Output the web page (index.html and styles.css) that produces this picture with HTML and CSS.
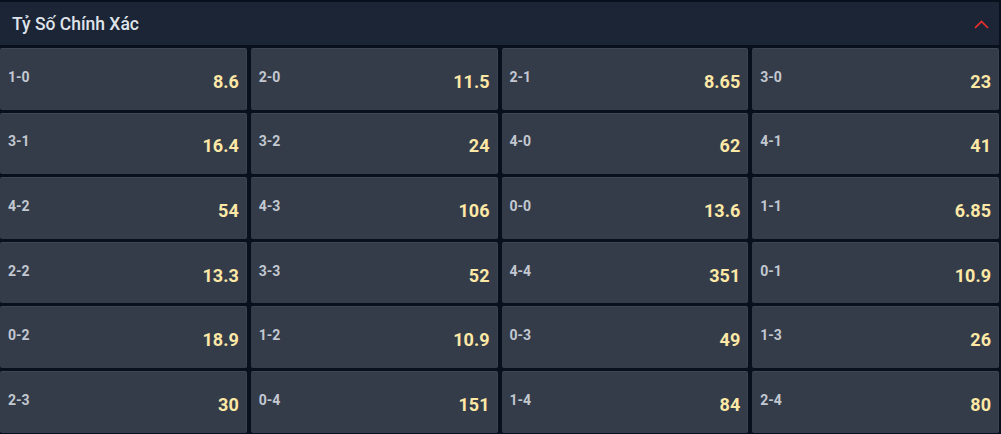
FILE: index.html
```html
<!DOCTYPE html>
<html lang="vi">
<head>
<meta charset="utf-8">
<link rel="stylesheet" href="styles.css">
</head>
<body>
<div class="panel">
  <div class="header">
    <span class="title">Tỷ Số Chính Xác</span>
    <svg class="chev" width="15" height="9" viewBox="0 0 15 9"><path d="M1 8 L7.5 1.5 L14 8" fill="none" stroke="#ec2f2f" stroke-width="1.7"/></svg>
  </div>
  <div class="grid">
    <div class="cell"><span class="lbl">1-0</span><span class="odd">8.6</span></div>
    <div class="cell"><span class="lbl">2-0</span><span class="odd">11.5</span></div>
    <div class="cell"><span class="lbl">2-1</span><span class="odd">8.65</span></div>
    <div class="cell"><span class="lbl">3-0</span><span class="odd">23</span></div>
    <div class="cell"><span class="lbl">3-1</span><span class="odd">16.4</span></div>
    <div class="cell"><span class="lbl">3-2</span><span class="odd">24</span></div>
    <div class="cell"><span class="lbl">4-0</span><span class="odd">62</span></div>
    <div class="cell"><span class="lbl">4-1</span><span class="odd">41</span></div>
    <div class="cell"><span class="lbl">4-2</span><span class="odd">54</span></div>
    <div class="cell"><span class="lbl">4-3</span><span class="odd">106</span></div>
    <div class="cell"><span class="lbl">0-0</span><span class="odd">13.6</span></div>
    <div class="cell"><span class="lbl">1-1</span><span class="odd">6.85</span></div>
    <div class="cell"><span class="lbl">2-2</span><span class="odd">13.3</span></div>
    <div class="cell"><span class="lbl">3-3</span><span class="odd">52</span></div>
    <div class="cell"><span class="lbl">4-4</span><span class="odd">351</span></div>
    <div class="cell"><span class="lbl">0-1</span><span class="odd">10.9</span></div>
    <div class="cell"><span class="lbl">0-2</span><span class="odd">18.9</span></div>
    <div class="cell"><span class="lbl">1-2</span><span class="odd">10.9</span></div>
    <div class="cell"><span class="lbl">0-3</span><span class="odd">49</span></div>
    <div class="cell"><span class="lbl">1-3</span><span class="odd">26</span></div>
    <div class="cell"><span class="lbl">2-3</span><span class="odd">30</span></div>
    <div class="cell"><span class="lbl">0-4</span><span class="odd">151</span></div>
    <div class="cell"><span class="lbl">1-4</span><span class="odd">84</span></div>
    <div class="cell"><span class="lbl">2-4</span><span class="odd">80</span></div>
  </div>
</div>
</body>
</html>
```

FILE: styles.css
```css
* { box-sizing: border-box; }
html, body {
  margin: 0;
  background: #08101d;
  font-family: Roboto, "Liberation Sans", Arial, sans-serif;
  overflow: hidden;
}
.panel {
  width: 1001px;
  height: 434px;
  padding-top: 2px;
  padding-right: 2px;
}
.header {
  height: 43px;
  background: #1c2535;
  display: flex;
  align-items: center;
  justify-content: space-between;
  padding: 0 10px 0 12px;
}
.title {
  color: #dfe3ea;
  font-size: 17.5px;
  font-weight: 500;
}
.chev { margin-top: 2px; }
.grid {
  margin-top: 3px;
  display: grid;
  grid-template-columns: repeat(4, 1fr);
  grid-auto-rows: 61.6px;
  column-gap: 4px;
  row-gap: 3px;
}
.cell {
  background: #343c4a;
  border-top: 1px solid #3f4756;
  border-right: 1px solid #3b4351;
  border-radius: 2px;
  display: flex;
  align-items: center;
  justify-content: space-between;
  padding: 0 7px 0 8px;
}
.lbl {
  color: #c3c8d1;
  font-size: 14px;
  font-weight: 700;
  padding-bottom: 5px;
}
.odd {
  color: #fde8a6;
  font-size: 18px;
  font-weight: 700;
  padding-top: 4px;
}
```
